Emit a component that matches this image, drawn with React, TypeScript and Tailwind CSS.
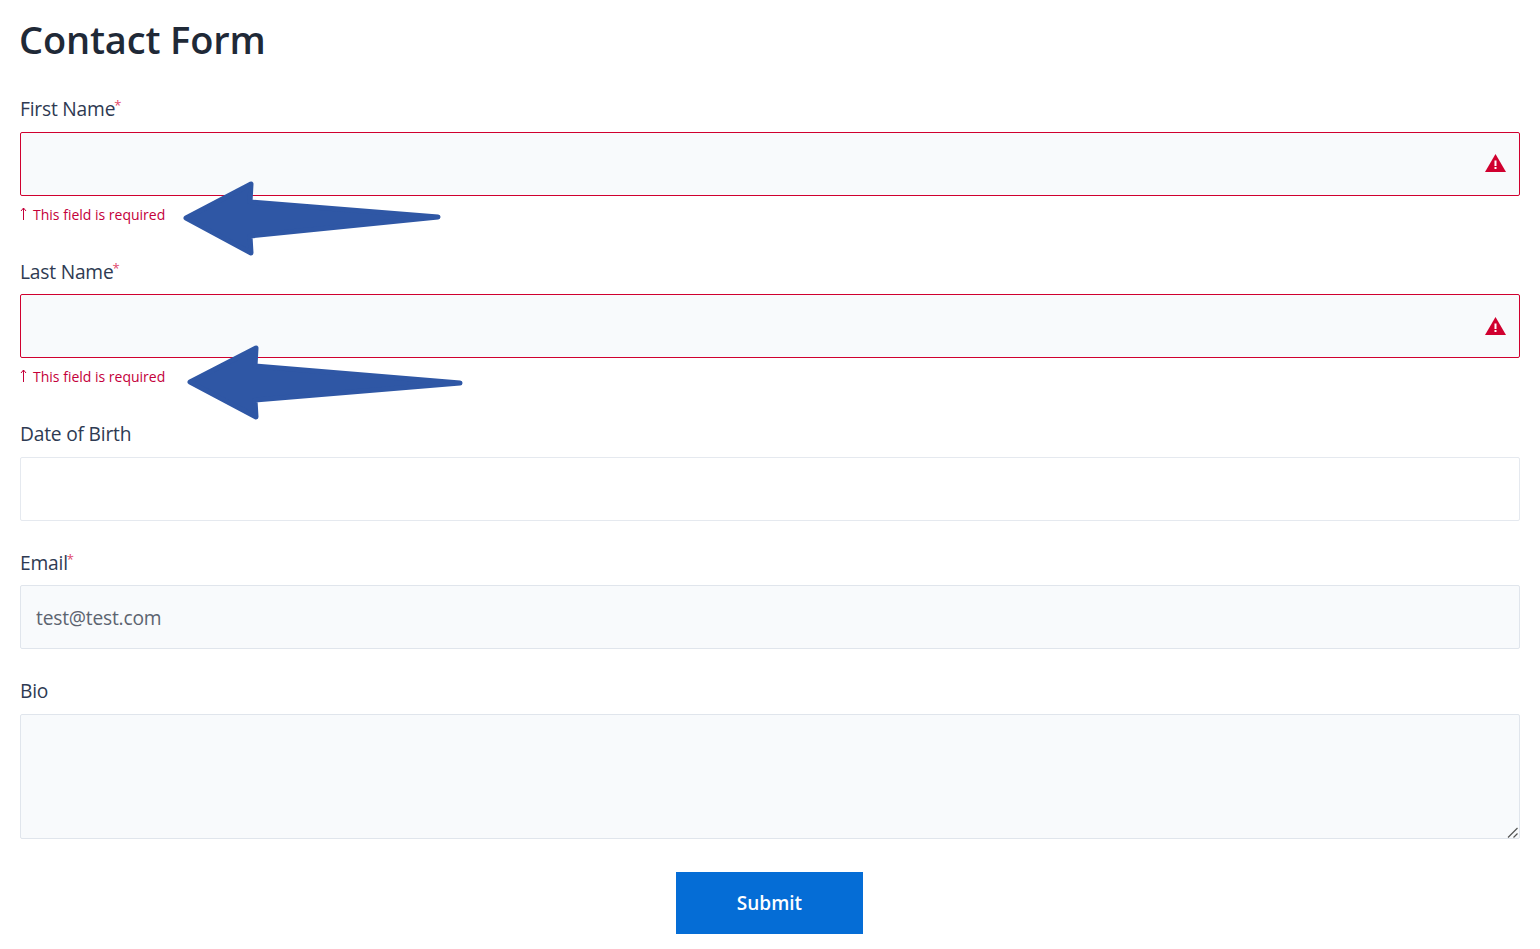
const fontStack = { fontFamily: '"Open Sans", "Noto Sans", sans-serif' }

function Label({ text, required, className }: { text: string; required?: boolean; className: string }) {
  return (
    <label className={`block text-[19.2px] leading-6 tracking-[-0.2px] text-[#2e3a52] ${className}`}>
      {text}
      {required && <sup className="top-[-6px] ml-[-1px] text-[13px] leading-none text-[#e0486b]">*</sup>}
    </label>
  )
}

function ErrorInput({ iconTop }: { iconTop: string }) {
  return (
    <div className="relative">
      <input className="block h-16 w-full rounded-[2px] border border-[#d0002f] bg-[#f8fafc] px-4 outline-none" />
      <svg className={`absolute right-[14px] h-[18px] w-[21px] ${iconTop}`} viewBox="0 0 21 18">
        <path d="M10.5 0 L21 18 L0 18 Z" fill="#d0002f" />
        <rect x="9.5" y="6.5" width="2" height="5.5" fill="#fff" />
        <rect x="9.5" y="13" width="2" height="2" fill="#fff" />
      </svg>
    </div>
  )
}

function ErrorText() {
  return (
    <p className="mt-[9px] flex h-5 items-center text-[14px] leading-5 text-[#c4003a]">
      <svg className="mt-[-3px] mr-[6px] h-[13px] w-[7px]" viewBox="0 0 7 13" fill="none" stroke="currentColor" strokeWidth="1">
        <path d="M3.5 13 V1 M1 4 L3.5 1 L6 4" />
      </svg>
      This field is required
    </p>
  )
}

function Arrow({ className, points }: { className: string; points: string }) {
  return (
    <svg className={`absolute ${className}`} viewBox="0 0 290 80" width="290" height="80">
      <polygon
        points={points}
        fill="#2f57a5"
        stroke="#2f57a5"
        strokeWidth="5"
        strokeLinejoin="round"
      />
    </svg>
  )
}

export default function App() {
  return (
    <main className="relative min-h-[949px] bg-white px-5" style={fontStack}>
      <h1 className="ml-[-1px] flex h-[78px] items-center text-[38px] font-semibold tracking-[-0.15px] text-[#1f2937]">
        Contact Form
      </h1>

      <form>
        <Label text="First Name" required className="mt-[19px] mb-[11px]" />
        <ErrorInput iconTop="top-[22px]" />
        <ErrorText />

        <Label text="Last Name" required className="mt-[35px] mb-[10px]" />
        <ErrorInput iconTop="top-[23px]" />
        <ErrorText />

        <Label text="Date of Birth" className="mt-[35px] mb-[11px]" />
        <input className="block h-16 w-full rounded-[2px] border border-[#e5e9ef] bg-white px-4 outline-none" />

        <Label text="Email" required className="mt-[30px] mb-[10px]" />
        <input
          readOnly
          value="test@test.com"
          className="block h-16 w-full rounded-[2px] border border-[#e0e5ec] bg-[#f8fafc] px-[15px] text-[19.2px] tracking-[-0.2px] text-[#5c6470] outline-none"
        />

        <Label text="Bio" className="mt-[30px] mb-[11px]" />
        <div className="relative">
          <textarea className="block h-[125px] w-full resize-none rounded-[2px] border border-[#e0e5ec] bg-[#f8fafc] px-4 outline-none" />
          <svg className="absolute bottom-[1px] right-[1px] h-3 w-3" viewBox="0 0 12 12" fill="none" stroke="#555" strokeWidth="1.2">
            <path d="M1 11.5 L10.5 2 M6.5 11.5 L10.5 7.5" />
          </svg>
        </div>

        <div className="mt-[33px] flex justify-center pr-px">
          <button
            type="button"
            className="h-[62px] w-[187px] bg-[#056dd6] text-[19px] font-semibold text-white"
          >
            Submit
          </button>
        </div>
      </form>

      {/* annotation arrows drawn on top of the form */}
      <Arrow className="left-[170px] top-[178px]" points="16,40 81,6 80,24 268,39 80,58 81,75" />
      <Arrow className="left-[174px] top-[342px]" points="16,40 82,6 81,24 286,41 81,58 82,75" />
    </main>
  )
}
